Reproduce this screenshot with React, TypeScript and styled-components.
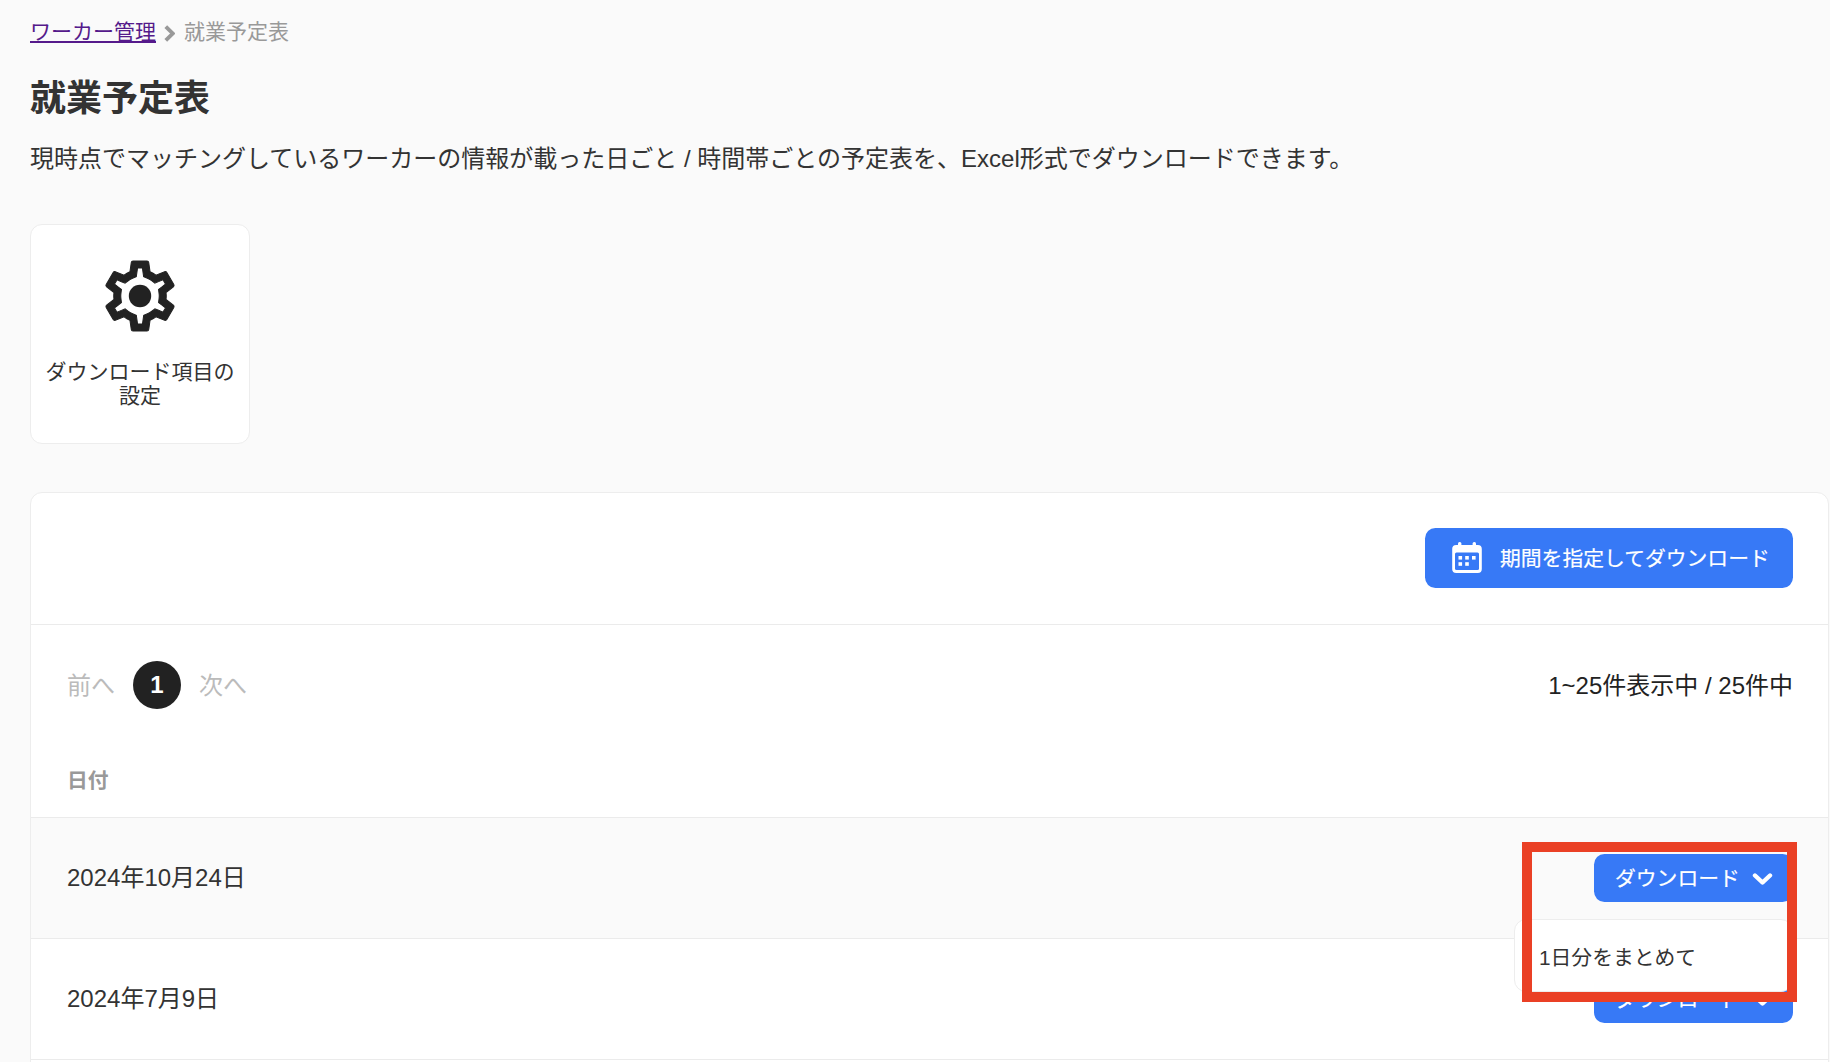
import React from "react";
import styled, { createGlobalStyle } from "styled-components";

const Global = createGlobalStyle`
  html, body { margin: 0; padding: 0; height: 1062px; overflow: hidden; background: #fafafa; }
  body { font-family: "Liberation Sans", "Noto Sans CJK JP", sans-serif; color: #333; }
  * { box-sizing: border-box; }
`;

const Page = styled.div`
  position: relative;
  height: 1062px;
  overflow: hidden;
  padding: 18px 1px 0 30px;
`;
const Breadcrumb = styled.nav`
  display: flex;
  align-items: center;
  height: 28px;
  font-size: 21px;
  line-height: 28px;
`;
const CrumbLink = styled.a`
  color: #551a8b;
  text-decoration: underline;
`;
const CrumbSep = styled.svg`
  width: 11px;
  height: 17px;
  margin: 2px 9px 0 8px;
  flex: none;
`;
const CrumbCurrent = styled.span`
  color: #999;
`;
const Title = styled.h1`
  margin: 31px 0 0;
  font-size: 36px;
  line-height: 44px;
  font-weight: 700;
  color: #333;
`;
const Description = styled.p`
  margin: 22px 0 0;
  font-size: 24px;
  line-height: 32px;
  color: #333;
  white-space: nowrap;
`;
const SettingsCard = styled.a`
  margin-top: 49px;
  width: 220px;
  height: 220px;
  background: #fff;
  border: 1px solid #ededed;
  border-radius: 12px;
  display: flex;
  flex-direction: column;
  align-items: center;
  padding: 29px 10px 0;
`;
const GearIcon = styled.svg`
  width: 84px;
  height: 84px;
  flex: none;
  color: #222;
`;
const SettingsLabel = styled.span`
  margin-top: 22px;
  font-size: 21px;
  line-height: 24px;
  text-align: center;
  color: #333;
`;
const Panel = styled.section`
  margin-top: 48px;
  background: #fff;
  border: 1px solid #ededed;
  border-radius: 12px 12px 0 0;
  height: 700px;
`;
const PanelTop = styled.div`
  display: flex;
  justify-content: flex-end;
  padding: 35px 35px 36px 0;
  border-bottom: 1px solid #ebebeb;
`;
const PrimaryButton = styled.button`
  display: flex;
  align-items: center;
  border: 0;
  background: #3779f6;
  color: #fff;
  font: inherit;
  font-size: 20.8px;
  cursor: pointer;
  -webkit-text-stroke: 0.2px #fff;
`;
const ButtonLabel = styled.span`
  padding-bottom: 2px;
`;
const RangeButton = styled(PrimaryButton)`
  width: 368px;
  height: 60px;
  border-radius: 10.4px;
  padding: 0 0 0 26px;
  gap: 17px;
`;
const CalendarIcon = styled.svg`
  width: 32px;
  height: 32px;
  flex: none;
`;
const Pager = styled.div`
  display: flex;
  align-items: center;
  justify-content: space-between;
  padding: 11px 35px 0 36px;
  height: 109px;
`;
const PagerLinks = styled.div`
  display: flex;
  align-items: center;
  gap: 18px;
`;
const PagerText = styled.span`
  font-size: 24px;
  color: #bbb;
  padding-bottom: 4px;
`;
const PageCircle = styled.span`
  width: 48px;
  height: 48px;
  border-radius: 50%;
  background: #222;
  color: #fff;
  font-size: 24px;
  font-weight: 700;
  display: flex;
  align-items: center;
  justify-content: center;
`;
const PagerCount = styled.span`
  font-size: 24px;
  color: #222;
  padding-bottom: 4px;
`;
const TableHead = styled.div`
  height: 84px;
  padding: 31px 36px 0;
  border-bottom: 1px solid #ebebeb;
  font-size: 20.8px;
  line-height: 32px;
  font-weight: 700;
  color: #999;
`;
const Row = styled.div<{ $active?: boolean }>`
  position: relative;
  height: 121px;
  display: flex;
  align-items: center;
  justify-content: space-between;
  padding: 0 35px 0 36px;
  border-bottom: 1px solid #ebebeb;
  background: ${(p) => (p.$active ? "#fafafa" : "#fff")};
  font-size: 24px;
  color: #333;
`;
const DateText = styled.span`
  padding-bottom: 6px;
`;
const DownloadButton = styled(PrimaryButton)`
  width: 199px;
  height: 48px;
  border-radius: 10.4px;
  padding: 0 0 0 21px;
  gap: 12px;
`;
const Chevron = styled.svg`
  width: 21px;
  height: 14px;
  flex: none;
  margin-top: 2px;
`;
const Dropdown = styled.div`
  position: absolute;
  z-index: 2;
  top: 101px;
  right: 35px;
  width: 279px;
  height: 73px;
  display: flex;
  align-items: center;
  padding: 0 24px;
  background: #fff;
  border: 1px solid #ededed;
  border-radius: 12px;
  font-size: 20.8px;
  color: #333;
  white-space: nowrap;
`;
const Annotation = styled.div`
  position: absolute;
  z-index: 5;
  left: 1522px;
  top: 842px;
  width: 275px;
  height: 160px;
  border: 10px solid #ea4025;
`;

const ChevronDown = () => (
  <Chevron viewBox="0 0 21 14" fill="none">
    <path d="M3 3.5 10.5 10.5 18 3.5" stroke="#fff" strokeWidth="4.4" strokeLinecap="round" strokeLinejoin="round" />
  </Chevron>
);

const gearOuter =
  "M19.43 12.98c.04-.32.07-.64.07-.98 0-.34-.03-.66-.07-.98l2.11-1.65c.19-.15.24-.42.12-.64l-2-3.46c-.09-.16-.26-.25-.44-.25-.06 0-.12.01-.17.03l-2.49 1c-.52-.4-1.08-.73-1.69-.98l-.38-2.65C14.46 2.18 14.25 2 14 2h-4c-.25 0-.46.18-.49.42l-.38 2.65c-.61.25-1.17.59-1.69.98l-2.49-1c-.06-.02-.12-.03-.18-.03-.17 0-.34.09-.43.25l-2 3.46c-.13.22-.07.49.12.64l2.11 1.65c-.04.32-.07.65-.07.98 0 .33.03.66.07.98l-2.11 1.65c-.19.15-.24.42-.12.64l2 3.46c.09.16.26.25.44.25.06 0 .12-.01.17-.03l2.49-1c.52.4 1.08.73 1.69.98l.38 2.65c.03.24.24.42.49.42h4c.25 0 .46-.18.49-.42l.38-2.65c.61-.25 1.17-.59 1.69-.98l2.49 1c.06.02.12.03.18.03.17 0 .34-.09.43-.25l2-3.46c.12-.22.07-.49-.12-.64l-2.11-1.65zm-1.98-1.71c.04.31.05.52.05.73 0 .21-.02.43-.05.73l-.14 1.13.89.7 1.08.84-.7 1.21-1.27-.51-1.04-.42-.9.68c-.43.32-.84.56-1.25.73l-1.06.43-.16 1.13-.2 1.35h-1.4l-.19-1.35-.16-1.13-1.06-.43c-.43-.18-.83-.41-1.23-.71l-.91-.7-1.06.43-1.27.51-.7-1.21 1.08-.84.89-.7-.14-1.13c-.03-.31-.05-.54-.05-.74s.02-.43.05-.73l.14-1.13-.89-.7-1.08-.84.7-1.21 1.27.51 1.04.42.9-.68c.43-.32.84-.56 1.25-.73l1.06-.43.16-1.13.2-1.35h1.39l.19 1.35.16 1.13 1.06.43c.43.18.83.41 1.23.71l.91.7 1.06-.43 1.27-.51.7 1.21-1.07.85-.89.7.14 1.13z";

export default function App() {
  return (
    <Page>
      <Global />
      <Breadcrumb>
        <CrumbLink href="#">ワーカー管理</CrumbLink>
        <CrumbSep viewBox="0 0 10 16" fill="none">
          <path d="M1.5 1.5 8 8 1.5 14.5" stroke="#999" strokeWidth="3.6" />
        </CrumbSep>
        <CrumbCurrent>就業予定表</CrumbCurrent>
      </Breadcrumb>
      <Title>就業予定表</Title>
      <Description>
        現時点でマッチングしているワーカーの情報が載った日ごと / 時間帯ごとの予定表を、Excel形式でダウンロードできます。
      </Description>
      <SettingsCard>
        <GearIcon viewBox="0 0 24 24" fill="currentColor">
          <path d={gearOuter} stroke="currentColor" strokeWidth="0.3" />
          <circle cx="12" cy="12" r="3.2" />
        </GearIcon>
        <SettingsLabel>
          ダウンロード項目の
          <br />
          設定
        </SettingsLabel>
      </SettingsCard>
      <Panel>
        <PanelTop>
          <RangeButton>
            <CalendarIcon viewBox="0 0 32 32">
              <rect x="7" y="0" width="3.4" height="6" rx="1.5" fill="#fff" />
              <rect x="21.6" y="0" width="3.4" height="6" rx="1.5" fill="#fff" />
              <rect x="1.2" y="3" width="29.6" height="28" rx="4" fill="#fff" />
              <rect x="4" y="10.5" width="24" height="17.5" rx="1.5" fill="#3779f6" />
              <rect x="7.5" y="14" width="3.6" height="3.6" fill="#fff" />
              <rect x="14.2" y="14" width="3.6" height="3.6" fill="#fff" />
              <rect x="21" y="14" width="3.6" height="3.6" fill="#fff" />
              <rect x="7.5" y="20.2" width="3.6" height="3.6" fill="#fff" />
              <rect x="14.2" y="20.2" width="3.6" height="3.6" fill="#fff" />
            </CalendarIcon>
            <ButtonLabel>期間を指定してダウンロード</ButtonLabel>
          </RangeButton>
        </PanelTop>
        <Pager>
          <PagerLinks>
            <PagerText>前へ</PagerText>
            <PageCircle>1</PageCircle>
            <PagerText>次へ</PagerText>
          </PagerLinks>
          <PagerCount>1~25件表示中 / 25件中</PagerCount>
        </Pager>
        <TableHead>日付</TableHead>
        <Row $active>
          <DateText>2024年10月24日</DateText>
          <DownloadButton>
            <ButtonLabel>ダウンロード</ButtonLabel>
            <ChevronDown />
          </DownloadButton>
          <Dropdown>1日分をまとめて</Dropdown>
        </Row>
        <Row>
          <DateText>2024年7月9日</DateText>
          <DownloadButton>
            <ButtonLabel>ダウンロード</ButtonLabel>
            <ChevronDown />
          </DownloadButton>
        </Row>
      </Panel>
      <Annotation />
    </Page>
  );
}
